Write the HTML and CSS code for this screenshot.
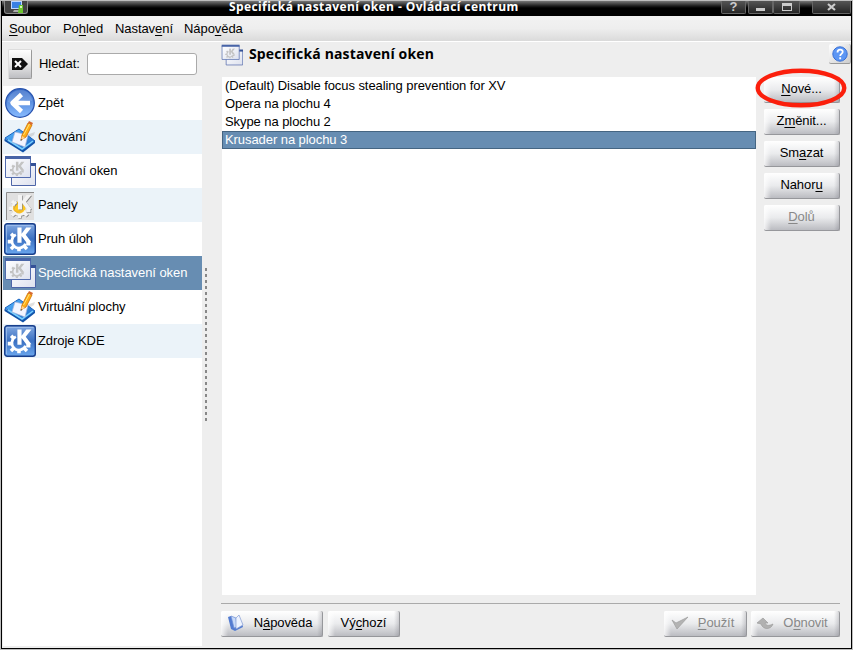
FILE: index.html
```html
<!doctype html>
<html lang="cs">
  <head>
    <meta charset="utf-8">
    <title>Specifická nastavení oken - Ovládací centrum</title>
    <link rel="stylesheet" href="styles.css">
  </head>
  <body>
    <svg class="defs" width="0" height="0">
      <defs>
        <linearGradient id="blue" x1="0" y1="0" x2="0" y2="1">
          <stop offset="0" stop-color="#82a9e2"/>
          <stop offset=".5" stop-color="#3b70c1"/>
          <stop offset="1" stop-color="#6ba7ee"/>
        </linearGradient>
        <linearGradient id="ball" x1="0" y1="0" x2="0" y2="1">
          <stop offset="0" stop-color="#3468c4"/>
          <stop offset="1" stop-color="#89bcff"/>
        </linearGradient>
        <linearGradient id="desk" x1="0" y1="0" x2="1" y2="1">
          <stop offset="0" stop-color="#58b7ff"/>
          <stop offset="1" stop-color="#1763c2"/>
        </linearGradient>
        <linearGradient id="pane" x1="0" y1="0" x2="1" y2="1">
          <stop offset="0" stop-color="#fff"/>
          <stop offset="1" stop-color="#dde1ee"/>
        </linearGradient>
        <symbol id="gear" viewBox="0 0 24 24">
          <path d="M8 7.800A6.800 6.800 0 1 0 17.300 16.500" fill="none" stroke="currentColor" stroke-width="2.600"/>
          <path d="M6 9.500 3.500 7M4 14.500H0M6 19l-2.700 2.700M11 21v3M16 19l2.700 2.700M18 16.500h4" fill="none" stroke="currentColor" stroke-width="3.400"/>
          <path d="M9.500 1h4v6L18 1h5l-5.500 6.800L23 15h-5l-4.500-6v6.500h-4z" fill="currentColor"/>
        </symbol>
        <symbol id="back" viewBox="0 0 32 32">
          <circle cx="16" cy="16" r="14.300" fill="url(#ball)" stroke="#2853ae" stroke-width="1.300"/>
          <path d="M4 15C5 6 11 3 17 3s11 5 11 11C20 11 12 19 4 15z" fill="#fff" opacity=".15"/>
          <path d="M17.500 7.500 8.500 16l9 8.500M10 16h16" fill="none" stroke="#fff" stroke-width="4.500" stroke-linejoin="round"/>
        </symbol>
        <symbol id="desktop" viewBox="0 0 32 32">
          <path d="M19 15l12-4-1 3-10 6z" fill="#999" opacity=".3"/>
          <path d="M1 17 15 8l16 12-12 10z" fill="url(#desk)" stroke="#1862c0"/>
          <path d="m.5 17.500 18.500 11.500 12-9v2l-12 9.500L.5 20z" fill="#1254aa"/>
          <path d="m4 19 14 9 11-8" fill="none" stroke="#79d0ff" stroke-width="1.500"/>
          <path d="m11 11 13 3-3 12-13-5z" fill="#f3f5ff" stroke="#a9b5d8" stroke-width=".7"/>
          <path d="m17 19 1-5 6-12 4 2-6 12z" fill="#ffae17" stroke="#c96b00" stroke-width=".8"/>
          <path d="m19.500 14 6-11" stroke="#ffe47b"/>
          <path d="m17 19 1-4 3 2z" fill="#ffd49b"/>
          <path d="m24 2 1-2 4 2-1 2z" fill="#d66a32"/>
          <path d="m16.500 20 .5-2 1 1z" fill="#222"/>
        </symbol>
        <symbol id="windows" viewBox="0 0 32 32">
          <path d="M7.500 9.500h24v21h-24z" fill="url(#pane)" stroke="#4d65a8"/>
          <path d="M7 8h25v3H7z" fill="#345197"/>
          <path d="M1.500 2.500h25v20h-25z" fill="url(#pane)" stroke="#526bae"/>
          <path d="M1 1h26v3H1z" fill="#4864a7"/>
          <use href="#gear" x="6" y="6" width="15" height="15" color="#c3c3c3"/>
        </symbol>
        <symbol id="panel" viewBox="0 0 32 32">
          <path d="M2 3h28v28H2z" fill="#e0e0e0"/>
          <path d="M2.500 31V3.500H30" fill="none" stroke="#8c8c8c"/>
          <circle cx="14.500" cy="19.500" r="7" fill="#ffc81c"/>
          <use href="#gear" x="5.200" y="5.700" width="24" height="24" color="#858585"/>
          <use href="#gear" x="4.500" y="5" width="24" height="24" color="#f3f3f3"/>
          <path d="M10 17c-1 4 1 6 5 6 2 0 3-1 4-2" fill="none" stroke="#f5b928" stroke-width="1.500"/>
        </symbol>
        <symbol id="kde" viewBox="0 0 32 32">
          <rect x=".7" y=".7" width="30.600" height="30.600" rx="2.500" fill="url(#blue)" stroke="#183f8c" stroke-width="1.400"/>
          <path d="M2.500 29V2.500h27" fill="none" stroke="#a6c5f0" opacity=".7"/>
          <use href="#gear" x="3.500" y="3.500" width="25" height="25" color="#fff"/>
        </symbol>
      </defs>
    </svg>

    <div class="window">
      <header class="titlebar">
        <span class="title-icon">
          <svg width="16" height="12" viewBox="0 0 16 12"><path d="M1 0h11v8H1z" fill="#bcd6ff"/><path d="M2 1h9v6H2z" fill="#3980e3"/><path d="M4 9h6v2H3z" fill="#aaa"/><path d="M9 4h4v8H8z" fill="#6bc52e"/><path d="M10 5h2v2h-2z" fill="#d7f7b5"/></svg>
        </span>
        <h1 class="title">Specifická nastavení oken - Ovládací centrum</h1>
        <div class="title-buttons">
          <span class="title-btn help">?</span>
          <span class="title-btn min"><svg width="12" height="12"><path d="M1 7h9v3H1z" fill="#ccc"/></svg></span>
          <span class="title-btn max"><svg width="12" height="12"><path d="M1 2h10v8H1zm1 3v4h8V5z" fill="#ccc" fill-rule="evenodd"/></svg></span>
          <span class="title-btn close"><svg width="12" height="12"><path d="m2 3 7 6m0-6L2 9" stroke="#ccc" stroke-width="2.200"/></svg></span>
        </div>
      </header>

      <nav class="menu">
        <span class="m-file"><u>S</u>oubor</span>
        <span class="m-view">Po<u>h</u>led</span>
        <span class="m-settings">Nastav<u>e</u>ní</span>
        <span>Nápo<u>v</u>ěda</span>
      </nav>

      <div class="main">
        <aside class="sidebar">
          <div class="search">
            <button class="clear">
              <svg width="18" height="14" viewBox="0 0 18 14"><path d="M1 1h10l6 6-6 6H1z" fill="#111"/><path d="m4 4 6 6m0-6-6 6" stroke="#fff" stroke-width="2"/></svg>
            </button>
            <label for="q">H<u>l</u>edat:</label>
            <input id="q" class="search-input" type="text">
          </div>
          <ul class="modules">
            <li><svg><use href="#back"/></svg>Zpět</li>
            <li><svg><use href="#desktop"/></svg>Chování</li>
            <li><svg><use href="#windows"/></svg>Chování oken</li>
            <li><svg><use href="#panel"/></svg>Panely</li>
            <li><svg><use href="#kde"/></svg>Pruh úloh</li>
            <li class="selected"><svg><use href="#windows"/></svg>Specifická nastavení oken</li>
            <li><svg><use href="#desktop"/></svg>Virtuální plochy</li>
            <li><svg><use href="#kde"/></svg>Zdroje KDE</li>
          </ul>
        </aside>
        <div class="splitter"><span class="grip"></span></div>

        <section class="content">
          <div class="heading">
            <svg width="22" height="22"><use href="#windows"/></svg>
            <h2>Specifická nastavení oken</h2>
            <button class="help-btn">
              <svg width="16" height="16"><circle cx="8" cy="8" r="7.200" fill="#5c96f4" stroke="#386fd5"/><path d="M5.500 6.500c0-4 5.500-3.500 5.200-.5C10.500 8 8.200 7.800 8.200 10M8.200 11.300v2" fill="none" stroke="#fff" stroke-width="1.800"/></svg>
            </button>
          </div>
          <div class="rules">
            <ul class="rule-list">
              <li>(Default) Disable focus stealing prevention for XV</li>
              <li>Opera na plochu 4</li>
              <li>Skype na plochu 2</li>
              <li class="selected">Krusader na plochu 3</li>
            </ul>
            <div class="actions">
              <div class="marked">
                <button class="btn"><u>N</u>ové...</button>
                <svg class="mark" width="92" height="42"><ellipse cx="46" cy="21" rx="43.300" ry="17.300" fill="none" stroke="#fb1f0c" stroke-width="4.400"/></svg>
              </div>
              <button class="btn">Z<u>m</u>ěnit...</button>
              <button class="btn">Sm<u>a</u>zat</button>
              <button class="btn">Nahor<u>u</u></button>
              <button class="btn" disabled><u>D</u>olů</button>
            </div>
          </div>
          <footer class="footer">
            <button class="btn b-help">
              <svg width="18" height="18"><path d="m1 3 3-1 4 11 7-4 1 4-8 4-4-2z" fill="#527bd1"/><path d="m4 2 5 2 1 9-3 1z" fill="#c7d9f8" stroke="#6a8dd5" stroke-width=".7"/><path d="m9 4 3-3 4 10-7 4z" fill="#edf3ff" stroke="#829bd3" stroke-width=".7"/></svg>
              <span>N<u>á</u>pověda</span>
            </button>
            <button class="btn b-default">Vý<u>c</u>hozí</button>
            <button class="btn b-apply" disabled>
              <svg width="18" height="18"><path d="m1 6 4 3L17 3 6 15z" fill="#b3b3b3" stroke="#9d9d9d" stroke-width=".7"/></svg>
              <span><u>P</u>oužít</span>
            </button>
            <button class="btn b-reset" disabled>
              <svg width="18" height="18"><path d="m1 9 6-5 5 5H9c1 3 4 3 8 1-2 6-10 6-12 0z" fill="#b1b1b1" stroke="#9d9d9d" stroke-width=".7"/></svg>
              <span>O<u>b</u>novit</span>
            </button>
          </footer>
        </section>
      </div>
    </div>
  </body>
</html>
```
FILE: styles.css
```css
* {
  box-sizing: border-box;
}
body {
  margin: 0;
  height: 650px;
  padding: 1px;
  overflow: hidden;
  background: #bdbdbd;
  font: 13px/16px "Liberation Sans", sans-serif;
  letter-spacing: -0.07px;
  color: #000;
}
.defs {
  position: absolute;
}
u {
  text-decoration: underline;
  text-underline-offset: 2px;
  text-decoration-thickness: 1px;
}
ul {
  list-style: none;
  margin: 0;
  padding: 0;
}
button {
  font: inherit;
  letter-spacing: inherit;
  color: inherit;
  padding: 0;
}
.window {
  display: flex;
  flex-direction: column;
  height: 648px;
  border: solid #000;
  border-width: 0 1px 1px;
  background: #eee;
}
.titlebar {
  display: flex;
  height: 15px;
  flex-shrink: 0;
  background: linear-gradient(#777, #1c1c1c 5px, #000 7px);
}
.title-icon {
  width: 24px;
  height: 13px;
  margin-left: 2px;
  padding-left: 5px;
  border: 1px solid #8a8a8a;
  border-top: 0;
  border-radius: 0 0 3px 3px;
  background: #444;
}
.title-icon svg {
  display: block;
}
.title {
  flex: 1;
  margin: 0;
  padding-left: 201px;
  font: bold 12px/11px "Open Sans", sans-serif;
  letter-spacing: 0.4px;
  white-space: nowrap;
  color: #fff;
}
.title-buttons {
  display: flex;
}
.title-btn {
  display: flex;
  justify-content: center;
  width: 25px;
  height: 13px;
  border: 1px solid #666;
  border-top: 0;
  border-radius: 0 0 2px 2px;
  background: linear-gradient(#555, #252525);
  font: bold 13px/12px "Liberation Sans", sans-serif;
  color: #ccc;
}
.title-btn.help {
  margin-right: 2px;
}
.title-btn.max {
  width: 27px;
  margin-right: 12px;
}
.title-btn.close {
  width: 39px;
}
.menu {
  display: flex;
  height: 26px;
  flex-shrink: 0;
  padding: 5px 0 0 7px;
  border-bottom: 1px solid #fff;
  background: linear-gradient(#f2f2f2, #eee 50%, #dadada);
}
.m-file {
  width: 54px;
}
.m-view {
  width: 52px;
}
.m-settings {
  width: 69px;
}
.main {
  display: flex;
  flex: 1;
  min-height: 0;
}
.sidebar {
  display: flex;
  flex-direction: column;
  width: 200px;
  padding: 0 0 2px 1px;
}
.search {
  display: flex;
  height: 44px;
  align-items: center;
  padding-left: 5px;
}
.search label {
  width: 40px;
}
.clear {
  display: flex;
  align-items: center;
  justify-content: center;
  width: 24px;
  height: 30px;
  margin-right: 7px;
  border: 1px solid #ddd;
  border-right-color: #999;
  border-bottom-color: #999;
  border-radius: 2px;
  background: linear-gradient(#fff, #e8e8e8 50%, #bdbec2);
}
.search-input {
  width: 110px;
  height: 22px;
  margin-left: 8px;
  border: 1px solid #aaa;
  border-radius: 3px;
  background: #fff;
}
.modules {
  flex: 1;
  background: #fff;
}
.modules li {
  display: flex;
  height: 34px;
  align-items: center;
  padding-bottom: 1px;
  white-space: nowrap;
}
.modules li:nth-child(even) {
  background: #ebf3f9;
}
.modules svg {
  width: 32px;
  height: 32px;
  margin: 1px 2px 0 1px;
  flex-shrink: 0;
}
.modules li.selected,
.rule-list li.selected {
  background: #678db2;
  color: #fff;
}
.splitter {
  width: 19px;
  padding: 226px 0 0 3px;
}
.grip {
  display: block;
  width: 2px;
  height: 154px;
  background: repeating-linear-gradient(#888 0 3px, #eee 3px 6px);
}
.content {
  display: flex;
  flex: 1;
  flex-direction: column;
  min-width: 0;
}
.heading {
  display: flex;
  height: 35px;
  align-items: flex-start;
  padding-top: 2px;
}
.heading h2 {
  flex: 1;
  margin: 0;
  padding-left: 6px;
  font: bold 14px/20px "Open Sans", sans-serif;
  letter-spacing: 0.15px;
}
.help-btn {
  display: flex;
  align-items: center;
  justify-content: center;
  width: 22px;
  height: 20px;
  border: 0;
  border-right: 1px solid #aaa;
  border-bottom: 1px solid #999;
  border-radius: 2px;
  background: linear-gradient(135deg, #fff, #ccc);
}
.rules {
  display: flex;
  height: 518px;
  padding-left: 1px;
}
.rule-list {
  width: 534px;
  background: #fff;
}
.rule-list li {
  height: 18px;
  padding-left: 3px;
  line-height: 18px;
}
.rule-list li.selected {
  padding-left: 2px;
  border: 1px solid #456582;
  line-height: 16px;
}
.actions {
  display: flex;
  flex-direction: column;
  gap: 6px;
  margin-left: 8px;
}
.btn {
  display: flex;
  align-items: center;
  justify-content: center;
  width: 76px;
  height: 26px;
  padding-bottom: 2px;
  border: solid #96979b;
  border-width: 0 1px 1px 0;
  border-radius: 2px;
  background: linear-gradient(90deg, rgba(255, 255, 255, 0.8), transparent 7px, transparent calc(100% - 5px), rgba(100, 100, 110, 0.25)), linear-gradient(#fff, #eaebed 50%, #bbbcc1);
}
.btn:disabled {
  color: #888;
}
.marked {
  position: relative;
}
.mark {
  position: absolute;
  left: -9px;
  top: -10px;
}
.footer {
  display: flex;
  height: 34px;
  margin: 8px 11px 0 0;
  padding-top: 7px;
  border-top: 1px solid #aaa;
}
.footer .btn svg {
  margin-right: 9px;
}
.footer .b-help {
  width: 102px;
  margin-right: 5px;
  padding-right: 4px;
}
.footer .b-default {
  width: 72px;
}
.footer .b-apply {
  width: 83px;
  margin-left: auto;
  margin-right: 4px;
  padding-right: 5px;
}
.footer .b-reset {
  width: 89px;
  padding-right: 6px;
}
```
